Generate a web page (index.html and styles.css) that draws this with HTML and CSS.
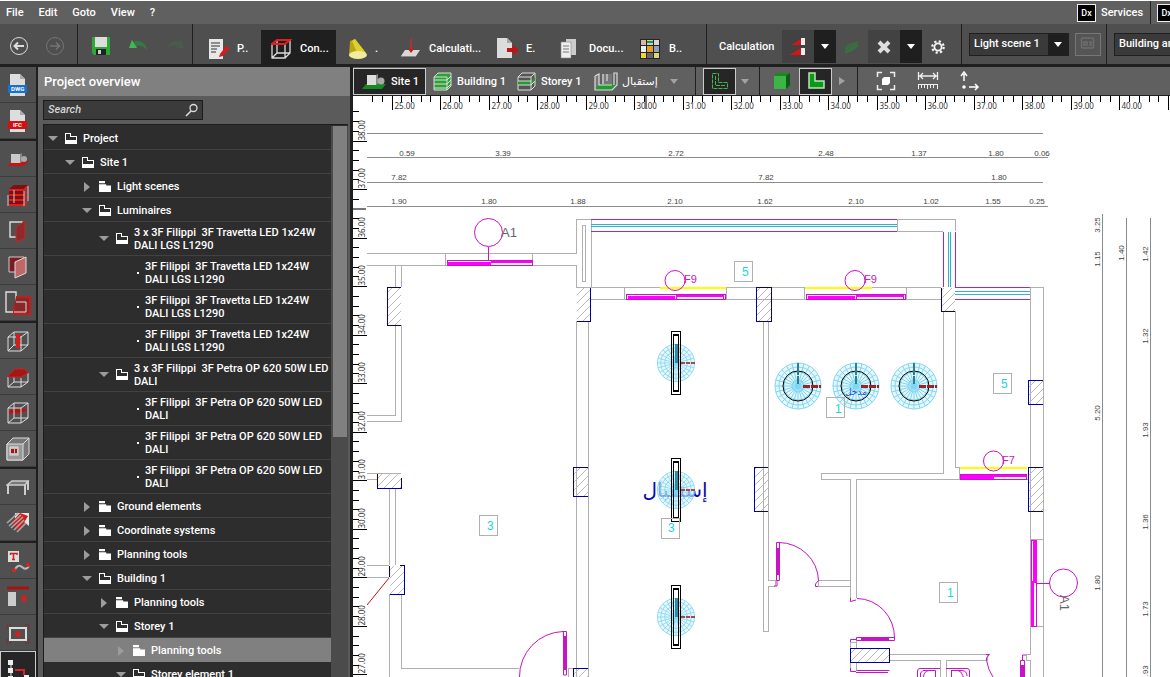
FILE: index.html
```html
<!DOCTYPE html>
<html lang="en">
<head>
<meta charset="utf-8">
<title>Project overview</title>
<link rel="stylesheet" href="styles.css">
</head>
<body>
<header class="menubar">
  <nav class="menus">
    <button>File</button><button>Edit</button><button>Goto</button><button>View</button><button>?</button>
  </nav>
  <div class="services">
    <button class="service"><span class="dx">Dx</span>Services</button>
    <button class="service"><span class="dx">Dx</span></button>
  </div>
</header>

<div class="toolbar">
  <div class="group nav">
    <button aria-label="Back"><svg width="20" height="20" viewBox="0 0 20 20" fill="none" stroke="#ddd"><circle cx="10" cy="10" r="8.500"/><path d="M5.500 10H15M9 6.500L5.500 10L9 13.500" stroke-width="2"/></svg></button>
    <button aria-label="Forward"><svg width="20" height="20" viewBox="0 0 20 20" fill="none" stroke="#747474"><circle cx="10" cy="10" r="8.500"/><path d="M5 10H14.500M11 6.500L14.500 10L11 13.500" stroke-width="1.500"/></svg></button>
  </div>
  <div class="group file">
    <button aria-label="Save"><svg width="20" height="20" viewBox="0 0 20 20"><path d="M1 1H19V19H3L1 17Z" fill="#2ca836"/><rect x="4" y="1" width="12" height="10" fill="#ddd"/><rect x="5" y="13" width="10" height="6" fill="#222"/><rect x="7" y="14" width="3" height="4" fill="#ccc"/></svg></button>
    <button aria-label="Undo"><svg width="20" height="16" viewBox="0 0 20 16"><path d="M1 10L4 2L6 4C12 1 18 5 19 12C16 8 12 7 8 8L9 10Z" fill="#347a42"/><path d="M1 10L4 2L9 10Z" fill="#46b558"/></svg></button>
    <button aria-label="Redo"><svg width="20" height="16" viewBox="0 0 20 16"><path d="M19 10L16 2L14 4C8 1 3 5 1 12C4 8 8 7 12 8L11 10Z" fill="#4a5a4d"/></svg></button>
  </div>
  <div class="group tabs">
    <button class="tab t-p"><svg class="ico" viewBox="0 0 22 22"><path d="M1 1H15V21H1Z" fill="#e8e8e8"/><path d="M3 5H12M3 8H12M3 11H9M3 14H8" stroke="#333"/><path d="M12 16L18 8L22 10L15 18L11 19Z" fill="#d51c1c"/></svg>P..</button>
    <button class="tab t-con on"><svg class="ico" viewBox="0 0 22 22" fill="none" stroke="#ddd" stroke-width="1.300"><path d="M1 6H14V20H1ZM14 20L19 15V2M1 20L6 15H19M6 15V3"/><path d="M1 6L6 2H19L14 6Z" stroke="#e02020" stroke-width="1.800"/></svg>Con...</button>
    <button class="tab t-lamp"><svg class="ico" viewBox="0 0 22 22"><path d="M4 3L9 1L20 15L3 18Z" fill="#b8a612"/><path d="M6 3L9 1L20 15L12 17Z" fill="#e0cf2c"/><ellipse cx="12" cy="17" rx="9" ry="4" fill="#f1eb9c"/></svg>.</button>
    <button class="tab t-calc"><svg class="ico" viewBox="0 0 22 22"><path d="M1 18L5 12H20L16 18Z" fill="#d8d8d8"/><path d="M1 18H16V19H1Z" fill="#888"/><path d="M11 1V12" stroke="#a33" stroke-width="2"/><path d="M8 11H14L11 15Z" fill="#d01818"/></svg>Calculati...</button>
    <button class="tab t-exp"><svg class="ico" viewBox="0 0 22 22"><path d="M0 0H10L15 5V20H0Z" fill="#dcdcdc"/><path d="M10 0V5H15Z" fill="#aaa"/><path d="M10 10H16V7L22 12L16 17V14H10Z" fill="#c01414"/></svg>E.</button>
    <button class="tab t-doc"><svg class="ico" viewBox="0 0 22 22"><path d="M6 1H16V17H6Z" fill="#ccc"/><path d="M1 4H11V20H1Z" fill="#eee" stroke="#888" stroke-width=".6"/><path d="M3 8H9M3 11H9M3 14H9" stroke="#777"/></svg>Docu...</button>
    <button class="tab t-b"><svg class="ico" viewBox="0 0 22 22"><rect width="20" height="20" x="0" y="1" fill="#252525"/><path d="M1 2H6V7H1Z" fill="#d9b7a4"/><path d="M7 2H13V7H7Z" fill="#b9d8bc"/><path d="M7 3H13V5H7Z" fill="#2f9040"/><path d="M14 2H19V7H14Z" fill="#e0d6cf"/><path d="M1 8H6V14H1Z" fill="#e8eef5"/><path d="M7 8H13V14H7Z" fill="#e99a28"/><path d="M14 8H19V14H14Z" fill="#8aa2bd"/><path d="M1 15H6V20H1Z" fill="#ecd92a"/><path d="M7 15H13V20H7Z" fill="#666"/><path d="M14 15H19V20H14Z" fill="#ded67a"/></svg>B..</button>
  </div>
  <div class="group calc">
    <span class="label">Calculation</span>
    <div class="split"><button aria-label="Start calculation"><svg width="20" height="20" viewBox="0 0 20 20"><path d="M3 8L13 2V8ZM1 18L13 11V18Z" fill="#d51515"/><path d="M13 1H17V8H13ZM13 11H17V18H13Z" fill="#eee"/></svg></button><button class="drop" aria-label="Calculation options"></button></div>
    <button class="leaf" aria-label="Energy"><svg width="18" height="16" viewBox="0 0 18 16"><path d="M2 11Q2 5 9 4L15 2Q15 7 10 11Q6 13 2 11Z" fill="#3d6a42"/><path d="M2 13Q8 13 15 6" stroke="#36743c" stroke-width="2" fill="none"/></svg></button>
    <div class="split"><button aria-label="Cancel"><svg width="16" height="16" viewBox="0 0 16 16"><path d="M3 3L13 13M13 3L3 13" stroke="#ddd" stroke-width="4"/></svg></button><button class="drop" aria-label="Cancel options"></button></div>
    <button class="gear" aria-label="Settings"><svg width="14" height="14" viewBox="0 0 14 14" fill="none" stroke="#f4f4f4"><circle cx="7" cy="7" r="3.600" stroke-width="1.800"/><circle cx="7" cy="7" r="5.700" stroke-width="2.200" stroke-dasharray="2.200 2.277"/></svg></button>
  </div>
  <div class="group scene">
    <span class="combo"><select aria-label="Light scene"><option>Light scene 1</option></select></span>
    <button class="view" aria-label="Scene view"><svg width="16" height="14" viewBox="0 0 16 14" fill="none" stroke="#6e6e6e" stroke-width="1.500"><rect x="1.500" y="1" width="12" height="10" rx="1"/><path d="M4 5H7V8H4ZM9 5H11V8H9"/></svg></button>
  </div>
  <div class="group building">
    <span class="combo wide"><select aria-label="Building"><option>Building and site</option></select></span>
  </div>
</div>

<main class="body">
  <nav class="rail" aria-label="Tools">
    <div class="rail-group">
      <button aria-label="DWG"><svg width="20" height="24" viewBox="0 0 20 24"><path d="M2 1H12L17 6V23H2Z" fill="#ddd"/><path d="M12 1V6H17Z" fill="#aaa"/><rect x="0" y="12" width="19" height="8" fill="#1871d0"/><text x="3" y="18" class="badge">DWG</text></svg></button>
      <button aria-label="IFC"><svg width="20" height="24" viewBox="0 0 20 24"><path d="M2 1H12L17 6V23H2Z" fill="#ddd"/><path d="M12 1V6H17Z" fill="#aaa"/><rect x="0" y="12" width="19" height="8" fill="#d21010"/><text x="5" y="18" class="badge">IFC</text></svg></button>
    </div>
    <div class="rail-group">
      <button aria-label="Site"><svg width="24" height="24" viewBox="0 0 24 24"><path d="M1 19L7 14H23L17 19Z" fill="#c41414"/><rect x="5" y="7" width="9" height="9" fill="#c9c9c9"/><path d="M14 7L16 6V15L14 16Z" fill="#888"/><circle cx="18" cy="12" r="3" fill="#aaa"/></svg></button>
      <button aria-label="Building"><svg width="24" height="24" viewBox="0 0 24 24"><path d="M3 6L8 2H22L18 6V22L3 21Z" fill="#7b1111"/><path d="M3 7H18L22 3M3 12H18L22 8M3 17H18L22 13M3 22H18L22 18" stroke="#e01c1c" stroke-width="2" fill="none"/><path d="M2 12V23M8 7V20M18 8V23M22 3V18" stroke="#ccc"/></svg></button>
      <button aria-label="Wall"><svg width="24" height="24" viewBox="0 0 24 24"><path d="M4 3H16V18H4Z" fill="none" stroke="#ddd" stroke-width="1.400"/><path d="M10 8L19 2V19L10 23Z" fill="#8e2a2c" stroke="#c02a2a"/></svg></button>
      <button aria-label="Door"><svg width="24" height="24" viewBox="0 0 24 24"><path d="M3 2H18V17H3Z" fill="#7c1b20" stroke="#ccc"/><path d="M9 7L20 2V18L9 23Z" fill="#c06868" stroke="#ddd"/></svg></button>
      <button aria-label="Floor plan"><svg width="26" height="24" viewBox="0 0 26 24"><path d="M1 1H11V10H21V21H1Z" fill="none" stroke="#ddd" stroke-width="1.400"/><path d="M11 6H25V23H9V15" fill="#8c2628" stroke="#c01d1d" stroke-width="2"/><path d="M11 11H21V21H9" fill="none" stroke="#ddd"/></svg></button>
    </div>
    <div class="rail-group">
      <button aria-label="Column"><svg width="24" height="24" viewBox="0 0 24 24" fill="none" stroke="#ddd"><path d="M2 8H15V22H2ZM15 22L22 16V3H8L2 8M15 8L22 3M8 3V16L2 22M8 16H22"/><path d="M12 5V19" stroke="#d61c1c" stroke-width="4"/></svg></button>
      <button aria-label="Roof"><svg width="24" height="24" viewBox="0 0 24 24" fill="none" stroke="#ddd"><path d="M2 12V22H15L22 17V8M15 22V13M2 22L8 17H22M8 12V17"/><path d="M2 11L9 4H19L22 8L15 12H2Z" fill="#a31717" stroke="#cc2020"/></svg></button>
      <button aria-label="Ceiling"><svg width="24" height="24" viewBox="0 0 24 24" fill="none" stroke="#ddd"><path d="M2 11L8 8H22L15 12H2Z" fill="#a51616" stroke="#c01818"/><path d="M2 7H15V22H2ZM15 22L22 17V2H8L2 7M15 7L22 2M8 2V17L2 22M8 17H22"/></svg></button>
      <button aria-label="Opening"><svg width="24" height="24" viewBox="0 0 24 24" stroke="#ddd"><path d="M1 7L7 1H23V17L17 23H1Z" fill="#777"/><path d="M1 7H17V23H1Z" fill="#999"/><path d="M17 7L23 1"/><rect x="4" y="10" width="8" height="8" fill="#bbb"/><path d="M5 12H8V16H5ZM9 12H11V16H9Z" fill="#a11" stroke="none"/></svg></button>
    </div>
    <div class="rail-group">
      <button aria-label="Furniture"><svg width="24" height="24" viewBox="0 0 24 24" fill="none" stroke="#ccc" stroke-width="2"><path d="M1 10L6 6H22L19 10Z" fill="#777" stroke-width="1.500"/><path d="M2 10V19M19 10V20M22 6V15"/></svg></button>
      <button aria-label="Materials"><svg width="24" height="24" viewBox="0 0 24 24"><path d="M9 2H23V15L18 11L15 16L9 9Z" fill="#e6e6e6"/><path d="M14 2L22 5L13 20L5 12Z" fill="#d51a1a"/><path d="M1 12L12 2M3 15L15 4M5 17L17 6M8 19L18 9M11 21L20 12" stroke="#aaa" stroke-width="1.600"/></svg></button>
    </div>
    <div class="rail-group">
      <button aria-label="Text and lines"><svg width="24" height="24" viewBox="0 0 24 24"><rect x="2" y="2" width="11" height="11" fill="#ddd"/><path d="M4 4.500H11V6M7.500 4V11M4.500 4V6M6 10.500H9" stroke="#c22" fill="none" stroke-width="1.500"/><path d="M8 22Q12 14 16 18T23 17" fill="none" stroke="#bbb" stroke-width="2"/><circle cx="8" cy="21" r="2" fill="#d22"/><circle cx="22" cy="16" r="2" fill="#d22"/></svg></button>
      <button aria-label="Measure"><svg width="24" height="24" viewBox="0 0 24 24"><path d="M1 3H23" stroke="#a11" stroke-width="3"/><rect x="2" y="7" width="8" height="14" fill="#ccc"/><path d="M15 13H21M18 10V17" stroke="#c22" stroke-width="3"/></svg></button>
      <button aria-label="Frame"><svg width="24" height="24" viewBox="0 0 24 24" fill="none"><rect x="4" y="7" width="16" height="12" stroke="#ddd" stroke-width="2"/><path d="M9 13H15M12 10V16" stroke="#c22" stroke-width="3"/><path d="M1 8V4H5M19 4H23V8M1 18V22H5M19 22H23V18" stroke="#822" stroke-dasharray="2 1"/></svg></button>
      <button class="on" aria-label="Project tree"><svg width="26" height="24" viewBox="0 0 26 24"><path d="M6 5V24" stroke="#eee"/><path d="M3 3H8V8H3ZM3 11H8V16H3ZM3 19H8V24H3ZM19 18H24V23H19Z" fill="#eee"/><path d="M10 13H19V18" stroke="#d22" stroke-width="2" fill="none"/></svg></button>
    </div>
  </nav>

  <section class="panel">
    <h1>Project overview</h1>
    <div class="search"><input type="text" placeholder="Search" aria-label="Search"><svg width="14" height="14" viewBox="0 0 14 14" fill="none" stroke="#ddd"><circle cx="8.500" cy="5" r="3.500" stroke-width="1.300"/><path d="M6 8L1 13" stroke-width="1.600"/></svg></div>
    <div class="tree-wrap">
      <ul class="tree">
        <li class="l0"><button class="tw open" aria-label="Collapse"></button><i class="fo"></i>Project</li>
        <li class="l1"><button class="tw open" aria-label="Collapse"></button><i class="fo"></i>Site 1</li>
        <li class="l2"><button class="tw" aria-label="Expand"></button><i class="fc"></i>Light scenes</li>
        <li class="l2"><button class="tw open" aria-label="Collapse"></button><i class="fo"></i>Luminaires</li>
        <li class="l3 two"><button class="tw open" aria-label="Collapse"></button><i class="fo"></i><span>3 x 3F Filippi&nbsp; 3F Travetta LED 1x24W<br>DALI LGS L1290</span></li>
        <li class="leafrow two"><span>3F Filippi&nbsp; 3F Travetta LED 1x24W<br>DALI LGS L1290</span></li>
        <li class="leafrow two"><span>3F Filippi&nbsp; 3F Travetta LED 1x24W<br>DALI LGS L1290</span></li>
        <li class="leafrow two"><span>3F Filippi&nbsp; 3F Travetta LED 1x24W<br>DALI LGS L1290</span></li>
        <li class="l3 two"><button class="tw open" aria-label="Collapse"></button><i class="fo"></i><span>3 x 3F Filippi&nbsp; 3F Petra OP 620 50W LED<br>DALI</span></li>
        <li class="leafrow two"><span>3F Filippi&nbsp; 3F Petra OP 620 50W LED<br>DALI</span></li>
        <li class="leafrow two"><span>3F Filippi&nbsp; 3F Petra OP 620 50W LED<br>DALI</span></li>
        <li class="leafrow two"><span>3F Filippi&nbsp; 3F Petra OP 620 50W LED<br>DALI</span></li>
        <li class="l2"><button class="tw" aria-label="Expand"></button><i class="fc"></i>Ground elements</li>
        <li class="l2"><button class="tw" aria-label="Expand"></button><i class="fc"></i>Coordinate systems</li>
        <li class="l2"><button class="tw" aria-label="Expand"></button><i class="fc"></i>Planning tools</li>
        <li class="l2"><button class="tw open" aria-label="Collapse"></button><i class="fo"></i>Building 1</li>
        <li class="l3"><button class="tw" aria-label="Expand"></button><i class="fc"></i>Planning tools</li>
        <li class="l3"><button class="tw open" aria-label="Collapse"></button><i class="fo"></i>Storey 1</li>
        <li class="l4 sel"><button class="tw" aria-label="Expand"></button><i class="fc"></i>Planning tools</li>
        <li class="l4"><button class="tw open" aria-label="Collapse"></button><i class="fo"></i>Storey element 1</li>
      </ul>
      <div class="scroll"><div class="thumb"></div></div>
    </div>
  </section>

  <section class="work">
    <div class="subbar">
      <div class="crumbs">
        <button class="crumb c-site on"><svg width="26" height="20" viewBox="0 0 26 20"><path d="M1 17L5 12H25L21 17Z" fill="#168a22"/><rect x="6" y="3" width="9" height="10" fill="#ddd"/><path d="M15 3L17 2V12L15 13Z" fill="#888"/><circle cx="20" cy="9" r="3.500" fill="#aaa"/></svg>Site 1</button>
        <button class="crumb c-bld"><svg width="20" height="20" viewBox="0 0 20 20"><path d="M1 5L5 1H18V14L14 18H1Z" fill="#2f9e3b" stroke="#ddd"/><path d="M1 8H14L18 4M1 12H14L18 8M1 16H14L18 12M1 5H14V18" stroke="#d4e8d4" fill="none"/></svg>Building 1</button>
        <button class="crumb c-sto"><svg width="20" height="20" viewBox="0 0 20 20"><path d="M1 5L5 1H18V14L14 18H1Z" fill="#555" stroke="#ddd"/><path d="M1 9H14L18 5V9L14 13H1Z" fill="#229a30"/><path d="M1 5H14V18M14 5L18 1M1 9H14M1 13H14L18 9" stroke="#ddd" fill="none"/></svg>Storey 1</button>
        <button class="crumb"><svg width="24" height="20" viewBox="0 0 24 20"><path d="M1 4V17L5 13V2ZM8 2H18V12H8Z" fill="#777"/><path d="M5 12H22L18 18H1Z" fill="#239a30"/><path d="M1 4V18H18L23 13V1H20V13M1 4L5 2V13H18M9 2V12M13 2V9" stroke="#ddd" fill="none" stroke-width="1.200"/></svg><span dir="rtl">إستقبال</span></button>
        <i class="caret"></i>
      </div>
      <div class="views first">
        <button class="sq on" aria-label="Outline view"><svg width="20" height="20" viewBox="0 0 20 20" fill="none" stroke="#45b54d" stroke-dasharray="4 1"><path d="M2.500 2.500H8.500V11.500H17.500V17.500H2.500ZM5.500 5V14.500H15"/></svg></button>
        <i class="caret"></i>
      </div>
      <div class="views second">
        <svg width="20" height="20" viewBox="0 0 20 20"><path d="M2 5L5 2H18L14 5V18H2Z" fill="#168c20"/><path d="M14 5L18 2V14L14 18Z" fill="#0c5c14"/><path d="M2 5H14V18H2Z" fill="#3cb446"/></svg>
        <button class="sq on" aria-label="Plan view"><svg width="20" height="20" viewBox="0 0 20 20"><path d="M3 2H9V10H18V17H3Z" fill="#0a9a14" stroke="#b5e6b8" stroke-width="1.500"/></svg></button>
        <i class="caret right"></i>
      </div>
      <div class="views third">
        <button aria-label="Fit"><svg width="20" height="20" viewBox="0 0 20 20" fill="none" stroke="#eee" stroke-width="1.500"><path d="M1.500 6V1.500H6M14 1.500H18.500V6M1.500 14V18.500H6M14 18.500H18.500V14"/><path d="M6 8L8 6H14V12L12 14H6Z" fill="#fff" stroke="none"/></svg></button>
        <button aria-label="Dimensions"><svg width="22" height="20" viewBox="0 0 22 20" fill="none" stroke="#eee"><path d="M1.500 1V9M20.500 1V9M2 5H20M6 2L3 5L6 8M16 2L19 5L16 8" stroke-width="1.300"/><path d="M1 13.500H21M1.500 13V18M4.500 13V17M7.500 13V17M10.500 13V18M13.500 13V17M16.500 13V17M20.500 13V18"/></svg></button>
        <button aria-label="Origin"><svg width="20" height="20" viewBox="0 0 20 20" fill="none" stroke="#fff" stroke-width="1.500"><path d="M4 10V3M1 5L4 1L7 5M9 16H17M15 13L18 16L15 19"/><circle cx="4" cy="16" r="1" fill="#fff"/></svg></button>
      </div>
    </div>
    <svg class="canvas" role="img" aria-label="Floor plan">
      <defs>
        <pattern id="hatch" width="8" height="8" patternUnits="userSpaceOnUse"><path d="M-1 9L9 -1M-1 1L1 -1M7 9L9 7" stroke="#bbb"/></pattern>
        <g id="web"></g>
        <g id="lin"><use href="#web" transform="scale(.81)"/><path d="M.5 -19V0" stroke="#2a8ea6" stroke-width="3"/><path d="M5 0H19" stroke="#a84848" stroke-width="2" stroke-dasharray="4 1"/><g shape-rendering="crispEdges" fill="none" stroke="#000"><rect x="-4.500" y="-31.500" width="9" height="63"/><rect x="-2.500" y="-28.500" width="5" height="57"/><path d="M-3 -28H3M-3 28H3" stroke-width="2"/></g></g>
        <g id="round"><use href="#web"/><circle r="15" fill="none" stroke="#000"/><path d="M0 -23V-2" stroke="#2a8090" stroke-width="2" stroke-dasharray="12 1"/><path d="M5 .5H23" stroke="#9a2424" stroke-width="3" stroke-dasharray="7 1"/></g>
        <g id="slider" fill="none"><path d="M0 .5H100M0 5.500H100M.5 0V5M99.500 0V5M50.500 1V5M97.500 0V5" stroke="#d010d0"/><path d="M2 3.500H49" stroke="#f0f" stroke-width="3"/><path d="M50 2H98" stroke="#f0f" stroke-width="2"/></g>
      </defs>
      <g transform="translate(-353 -96)">
        <path class="dims" d="M367 133.500H1043M367 157.500H1048M367 182.500H1043M367 206.500H1048M1102.500 214V2000M1126.500 218V2000M1150.500 218V2000"/>
        <path class="wall" d="M367 253.500H576.500V219.500H591.500V287.500M367 265.500H576.500V287.500H591M582.500 225.500H585.500V281.500H582.500ZM445.500 253V265M532.500 253V265
          M395.500 265V287M401.500 265V287M395.500 325V415.500H367M401.500 325V421.500H367M367 473.500H401M367 479.500H377M389.500 488V565M395.500 488V565M367 565.500H389M367 577.500H389M389.500 594V2000M401.500 594V668.500H519M568.500 677V668.500H576
          M576.500 321V2000M588.500 321V2000M591 287.500H941M591 299.500H941M624.500 287V299M726.500 287V299M804.500 287V299M906.500 287V299
          M763.500 321V631.500H768.500V586.500H775M768.500 321V580.500H775V586
          M897.500 219.500H955.500V231M897.500 219V231.500H943M1030.500 287.500H1043.500V2000M1030.500 287V654.500H1026M943.500 311V473.500H821.500V479.500H850.500V601M955.500 311V467.500H959.500V479.500H856.500V598M959 479.500H1028
          M850 580.500H818.500V586.500H850M1030 539.500H1043M1030 626.500H1043M850.500 641V648M856.500 641V648M850 642.500H856M850.500 662V671M856.500 662V671M889 654.500H987V660.500H946.500V700M889 660.500H940.500V700M1026 655V660H1030V700"/>
        <g class="pillars">
          <path class="hatched" d="M388 288H401V325H388ZM378 474H401V488H378ZM390 566H404V594H390ZM577 288H590V321H577ZM574 468H588V496H574ZM574 669H588V690H574ZM757 288H771V321H757ZM755 468H768V511H755ZM942 288H955V311H942ZM1029 381H1043V404H1029ZM1029 468H1043V511H1029ZM851 649H889V662H851Z"/>
          <path d="M401 287.500H387.500V325.500H401M377.500 473.500V488.500H401.500V478M389.500 565.500V577M389.500 594.500H404.500V565.500H400M590.500 287.500V321.500H577M588 467.500H573.500V496.500H588M588 668.500H573.500V690M756.500 287.500V321.500H771.500V287.500ZM768 467.500H754.500V511.500H768M941.500 287.500V311.500H955M1043 380.500H1028.500V404.500H1043M1043 467.500H1028.500V511.500H1043M850.500 648.500H889.500V662.500H850.500Z"/>
        </g>
        <path class="crimson" d="M591 219.500H897M591 231.500H897M943.500 232V287M955.500 232V287M955 287.500H1030M955 299.500H1030"/>
        <path class="cyan" d="M591 224.500H897M591 226.500H897M948.500 232V287M950.500 232V287M955 291.500H1030M955 294.500H1030"/>
        <path class="yellow" d="M660 288H726M805 288H872M960 468H1027"/>
        <g shape-rendering="crispEdges">
          <use href="#slider" x="626" y="294"/><use href="#slider" x="806" y="294"/>
          <path d="M447.500 260.500H532.500V265.500H447.500Z" fill="none" stroke="#d010d0"/><path d="M447 263.500H491" stroke="#f0f" stroke-width="3"/><path d="M491 262H532" stroke="#f0f" stroke-width="2"/>
          <path d="M960.500 474.500H1026.500V479.500H960.500Z" fill="none" stroke="#d010d0"/><path d="M961 477H994" stroke="#f0f" stroke-width="4"/><path d="M994 476H1026" stroke="#f0f" stroke-width="2"/>
          <path d="M1031.500 540.500H1036.500V626.500H1031.500Z" fill="none" stroke="#d010d0"/><path d="M1035 540V583" stroke="#f0f" stroke-width="4"/><path d="M1032.500 581V626" stroke="#f0f" stroke-width="3"/>
        </g>
        <g class="magenta">
          <circle cx="488.500" cy="232.500" r="14"/><path d="M488.500 247V261"/><circle cx="675" cy="280.500" r="10"/><circle cx="855" cy="280.500" r="10"/><circle cx="993.500" cy="461" r="10"/><circle cx="1063.500" cy="583" r="14"/><path d="M1037 583.500H1050"/>
          <path d="M519.500 677A45 45 0 0 1 563 631.500H566.500V675H563.500V631"/><path d="M565 636V670" stroke-width="4"/>
          <path d="M779 542.500A40 39 0 0 1 818.500 580.500L815.500 584V586.500H818M776.500 542.500H779.500V580.500H776.500ZM777 580V586H774"/><path d="M778 548V575" stroke-width="4"/>
          <path d="M857 598.500A38 39 0 0 1 894.500 638M856.500 637.500H894.500V640.500H856.500ZM850.500 598V601.500L856 600M850.500 642V639.500H856"/><path d="M861 639H889" stroke-width="3"/>
          <path d="M850.500 668V671.500H856M856.500 670.500H889.500M856 672.500H888M917.500 690V671Q917.500 668.500 920 668.500H940M923.500 690V677Q924 671 929 670.500H935.500V690M920.500 690V673L923 670.500H935"/>
          <path d="M946 668.500H967Q969.500 668.500 969.500 671V690M951.500 690V670.500H962Q967 671 967 676M951 670.500H958Q964 671 965.500 690M986.500 660V658L989.500 654.500H986M986.500 660Q988 670 993 677M1022.500 660V655H1026M1020.500 660.500H1024.500V690H1020.500Z"/><path d="M1022 665V690" stroke-width="4"/>
        </g>
        <path d="M367 605L389 578" stroke="#c01020"/>
        <text class="arabic" x="675" y="497" text-anchor="middle">إستقبال</text>
        <use href="#lin" x="676" y="363"/><use href="#lin" x="676" y="490"/><use href="#lin" x="676" y="617"/>
        <use href="#round" x="798" y="386"/><use href="#round" x="856" y="386"/><use href="#round" x="914" y="386"/>
        <text class="entry" x="856" y="395" text-anchor="middle">مدخل</text>
        <g class="rooms">
          <path d="M734.500 261.500h18v20h-18ZM479.500 515.500h18v20h-18ZM661.500 518.500h18v20h-18ZM826.500 397.500h18v20h-18ZM939.500 582.500h18v20h-18ZM993.500 373.500h18v20h-18Z"/>
          <text x="742" y="276">5</text><text x="487" y="530">3</text><text x="668" y="532">3</text><text x="835" y="413">1</text><text x="947" y="597">1</text><text x="1001" y="388">5</text>
        </g>
        <g class="tags"><text x="501" y="237" class="big">A1</text><text x="684" y="283">F9</text><text x="864" y="283">F9</text><text x="1002" y="464">F7</text><text class="big" transform="translate(1060 595) rotate(90)">A1</text></g>
        <g class="dimtext" id="dimtext"></g>
        <g class="ruler" id="ruler"></g>
      </g>
    </svg>
  </section>
</main>
<script src="plan.js"></script>
</body>
</html>
```
FILE: styles.css
```css
* { box-sizing: border-box; }
html, body { height: 100%; margin: 0; }
body { display: flex; flex-direction: column; overflow: hidden; background: #1f1f1f; color: #fff; font: 500 11px/14px Roboto, "DejaVu Sans", sans-serif; border-top: 1px solid #fff; }
button, select, input { font: inherit; color: inherit; border: 0; background: none; padding: 0; margin: 0; border-radius: 0; }
button { display: inline-flex; align-items: center; justify-content: center; white-space: nowrap; }
svg { flex: none; display: block; }

.menubar { flex: none; height: 23px; display: flex; justify-content: space-between; background: #606060; overflow: hidden; }
.menus { display: flex; gap: 15px; padding-left: 6px; }
.services { display: flex; width: 93px; flex: none; }
.service { gap: 5px; padding-right: 7px; border-right: 1px solid #222; margin-right: 6px; flex: none; }
.dx { width: 19px; height: 18px; border: 1px solid #eee; background: #000; font-size: 9px; line-height: 16px; text-align: center; }

.toolbar { flex: none; height: 43px; display: flex; background: #4f4f4f; border-bottom: 3px solid #1f1f1f; overflow: hidden; }
.group { flex: none; display: flex; align-items: center; border-right: 1px solid #1f1f1f; }
.nav { width: 78px; padding: 3px 0 0 9px; gap: 16px; }
.file { width: 115px; padding: 3px 0 0 13px; gap: 17px; }
.tabs { width: 514px; align-items: flex-end; padding-left: 5px; }
.tab { height: 34px; padding: 3px 0 0 10px; gap: 7px; justify-content: flex-start; flex: none; }
.tab.on { background: #1f1f1f; }
.ico { width: 22px; height: 22px; }
.t-p { width: 63px; } .t-con { width: 75px; } .t-lamp { width: 54px; } .t-calc { width: 97px; } .t-exp { width: 63px; } .t-doc { width: 80px; } .t-b { width: 75px; }
.calc { width: 255px; padding: 5px 0 0 12px; }
.label { width: 63px; }
.split { display: flex; height: 33px; background: #424242; }
.split button:first-child { width: 32px; }
.drop { width: 22px; background: #1f1f1f; }
.drop::before, .combo::after { content: ""; border: 4px solid transparent; border-top: 5px solid #fff; border-bottom: 0; }
.leaf { width: 32px; }
.gear { width: 32px; }
.scene { width: 145px; padding: 0 0 0 7px; gap: 6px; }
.combo { display: flex; align-items: center; width: 100px; height: 23px; border: 1px solid #1f1f1f; background: linear-gradient(90deg, #3a3a3a 78px, #1f1f1f 78px); padding-right: 6px; }
.combo select { appearance: none; flex: 1; padding-left: 4px; min-width: 0; }
.view { width: 26px; height: 23px; border: 1px solid #777; background: #555; }
.building { padding-left: 7px; }
.wide { width: 150px; background: #3a3a3a; }

.body { flex: 1; min-height: 0; display: flex; }
.rail { flex: none; width: 38px; overflow: hidden; border-right: 2px solid #1f1f1f; }
.rail-group { margin-bottom: 2px; background: #505050; }
.rail button { width: 36px; height: 36px; border-bottom: 1px solid #3c3c3c; display: flex; }
.rail button.on { background: #262626; border: 1px solid #ccc; }
.badge { font-size: 6px; font-weight: 700; fill: #fff; }

.panel { flex: none; width: 312px; display: flex; flex-direction: column; background: #5b5b5b; }
h1 { margin: 0; height: 29px; flex: none; background: #808080; font-size: 13px; font-weight: 500; line-height: 29px; padding-left: 6px; }
.search { margin: 4px 0 4px 5px; width: 160px; height: 20px; flex: none; display: flex; align-items: center; background: #3b3b3b; border: 1px solid #1c1c1c; padding-right: 3px; }
.search input { flex: 1; min-width: 0; padding-left: 4px; font-style: italic; outline: 0; }
.search input::placeholder { color: #d5d5d5; opacity: 1; }
.tree-wrap { flex: 1; min-height: 0; display: flex; margin: 0 2px 0 5px; border: solid #1c1c1c; border-width: 1px 0 0 1px; background: #2d2d2d; padding-top: 1px; }
.tree { flex: 1; margin: 0; padding: 0; list-style: none; overflow: hidden; }
.tree li { display: flex; align-items: center; height: 24px; border-bottom: 1px solid #424242; padding-top: 2px; white-space: nowrap; line-height: 13px; }
.tree li.two { height: 34px; padding-top: 0; }
.tree li.sel { background: #808080; border-color: #808080; }
.l0 { padding-left: 4px; } .l1 { padding-left: 21px; } .l2 { padding-left: 38px; } .l3 { padding-left: 55px; } .l4 { padding-left: 72px; }
.tw { width: 10px; height: 10px; margin-right: 7px; }
.tw::before { content: ""; border: 5px solid transparent; border-left: 6px solid #9c9c9c; border-right: 0; }
.tw.open::before { border: 5px solid transparent; border-top: 5px solid #9c9c9c; border-bottom: 0; }
.fo, .fc { flex: none; width: 12px; height: 11px; margin-right: 6px; background: #fff; clip-path: polygon(0 0, 50% 0, 50% 20%, 0 20%, 0 30%, 60% 30%, 60% 40%, 100% 40%, 100% 100%, 0 100%); }
.fo { background: linear-gradient(#fff, #fff) 0 100% / 12px 4px no-repeat, linear-gradient(#fff, #fff) 0 0 / 6px 1px no-repeat, linear-gradient(#fff, #fff) 0 0 / 1px 11px no-repeat, linear-gradient(#fff, #fff) 5px 0 / 1px 4px no-repeat, linear-gradient(#fff, #fff) 5px 3px / 7px 1px no-repeat, linear-gradient(#fff, #fff) 100% 100% / 1px 8px no-repeat; clip-path: none; }
.leafrow { padding-left: 93px; }
.leafrow::before { content: ""; width: 2px; height: 2px; background: #fff; margin-right: 6px; }
.scroll { flex: none; width: 17px; background: #4b4b4b; padding: 0 1px 0 2px; }
.thumb { height: 311px; background: #808080; }

.work { flex: 1; min-width: 0; display: flex; flex-direction: column; border-left: 3px solid #1f1f1f; background: #fff; }
.subbar { flex: none; height: 29px; display: flex; background: #606060; border-bottom: 1px solid #1f1f1f; overflow: hidden; }
.crumbs, .views { display: flex; align-items: center; flex: none; border-right: 1px solid #1f1f1f; }
.crumbs { width: 343px; }
.crumb { height: 27px; padding: 2px 0 0 7px; gap: 4px; flex: none; justify-content: flex-start; }
.c-site { width: 73px; } .c-bld { width: 84px; } .c-sto { width: 77px; }
.crumb.on, .sq.on { background: #262626; border: 1px solid #ccc; }
.caret { border: 4px solid transparent; border-top: 5px solid #a2a2a2; border-bottom: 0; margin-left: 12px; }
.first .caret { margin-left: 5px; }
.caret.right { border: 4px solid transparent; border-left: 6px solid #a2a2a2; border-right: 0; margin-left: 7px; }
.sq { width: 33px; height: 27px; }
.first { width: 64px; padding-left: 7px; }
.second { width: 98px; padding-left: 12px; }
.second .sq { margin-left: 7px; }
.third { border: 0; padding-left: 18px; gap: 21px; }

.canvas { flex: 1; min-height: 0; width: 100%; background: #fff; }
.wall, .dims, .pillars, .crimson, .cyan, .yellow, .rooms path { fill: none; shape-rendering: crispEdges; }
.wall, .rooms path { stroke: #b0b0b0; }
.dims { stroke: #8c8c8c; }
.pillars { stroke: #0000a0; }
.pillars .hatched { stroke: none; fill: url(#hatch); }
.crimson { stroke: #c0287a; }
.cyan { stroke: #30b4cc; }
.yellow { stroke: #ff0; stroke-width: 2; }
.magenta { fill: none; stroke: #c813c8; }
.arabic { fill: #0a0ab0; font: 20px "DejaVu Sans", sans-serif; }
.entry { fill: #2a50d8; font: 9px "DejaVu Sans", sans-serif; }
.rooms text { fill: #20d4dc; font: 12px "Liberation Sans", sans-serif; }
.tags text { fill: #c020c0; font: 11px "Liberation Sans", sans-serif; }
.tags .big { fill: #666; font-size: 13px; }
.dimtext { fill: #444; font: 8px "Liberation Sans", sans-serif; text-anchor: middle; }
.ruler { stroke: #000; shape-rendering: crispEdges; }
.ruler rect { fill: #fff; stroke: none; }
.ruler text { fill: #333; stroke: none; font: 400 8px "Noto Sans", sans-serif; }
.ruler .cursor { stroke: #777; stroke-width: 2; }
#web { fill: none; stroke: #7fd6f2; stroke-width: 1; }
#web .disc { fill: #d4f2fc; fill-opacity: .6; }
```
FILE: plan.js
```js
const NS = "http://www.w3.org/2000/svg";

function add(parent, name, attrs, text) {
  const el = document.createElementNS(NS, name);
  for (const key in attrs) el.setAttribute(key, attrs[key]);
  if (text) el.textContent = text;
  parent.append(el);
}

// Photometric web: concentric rings crossed by radial lines.
const web = document.getElementById("web");
add(web, "circle", { r: 23, class: "disc" });
[6, 14, 19].forEach(r => add(web, "circle", { r }));
let spokes = "";
for (let i = 0; i < 24; i++) {
  const a = i * Math.PI / 12;
  spokes += `M0 0L${(23 * Math.cos(a)).toFixed(2)} ${(23 * Math.sin(a)).toFixed(2)}`;
}
add(web, "path", { d: spokes });

// Dimension values above and beside the plan.
const dims = document.getElementById("dimtext");
[["0.59", 407, 156], ["3.39", 503, 156], ["2.72", 676, 156], ["2.48", 826, 156], ["1.37", 919, 156], ["1.80", 996, 156], ["0.06", 1042, 156],
 ["7.82", 399, 180], ["7.82", 766, 180], ["1.80", 999, 180],
 ["1.90", 399, 204], ["1.80", 489, 204], ["1.88", 578, 204], ["2.10", 675, 204], ["1.62", 765, 204], ["2.10", 856, 204], ["1.02", 931, 204], ["1.55", 993, 204], ["0.25", 1037, 204]]
  .forEach(([t, x, y]) => add(dims, "text", { x, y }, t));
[["3.25", 1100, 225], ["1.15", 1100, 259], ["5.20", 1100, 413], ["1.80", 1100, 583], ["1.40", 1124, 253],
 ["1.42", 1148, 254], ["1.32", 1148, 336], ["1.93", 1148, 430], ["1.36", 1148, 522], ["1.73", 1148, 609], ["1.93", 1148, 673]]
  .forEach(([t, x, y]) => add(dims, "text", { transform: `translate(${x} ${y}) rotate(-90)` }, t));

// Rulers along the top and left edges.
const ruler = document.getElementById("ruler");
const step = 48.53;
const right = Math.max(innerWidth, 1170), bottom = Math.max(innerHeight, 677);
add(ruler, "rect", { x: 353, y: 96, width: right, height: 14 });
add(ruler, "rect", { x: 353, y: 96, width: 14, height: bottom });
let ticks = "";
for (let i = -2; 393 + i * step / 5 < right; i++) {
  const x = Math.floor(393 + i * step / 5) - 0.5;
  const major = i % 5 === 0;
  ticks += `M${x} 96V${major ? 110 : 102}`;
  if (major) add(ruler, "text", { x: x + 2, y: 109 }, (25 + i / 5).toFixed(2));
}
for (let i = -3; 141 + i * step / 5 < bottom + step; i++) {
  const y = Math.floor(141 + i * step / 5) + 0.5;
  const major = i % 5 === 0;
  ticks += `M353 ${y}H${major ? 367 : 359}`;
  if (major) add(ruler, "text", { transform: `translate(365 ${y - 1}) rotate(-90)` }, (38 - i / 5).toFixed(2));
}
add(ruler, "path", { d: ticks });
add(ruler, "path", { d: "M646 96V109M353 209H366", class: "cursor" });
```
